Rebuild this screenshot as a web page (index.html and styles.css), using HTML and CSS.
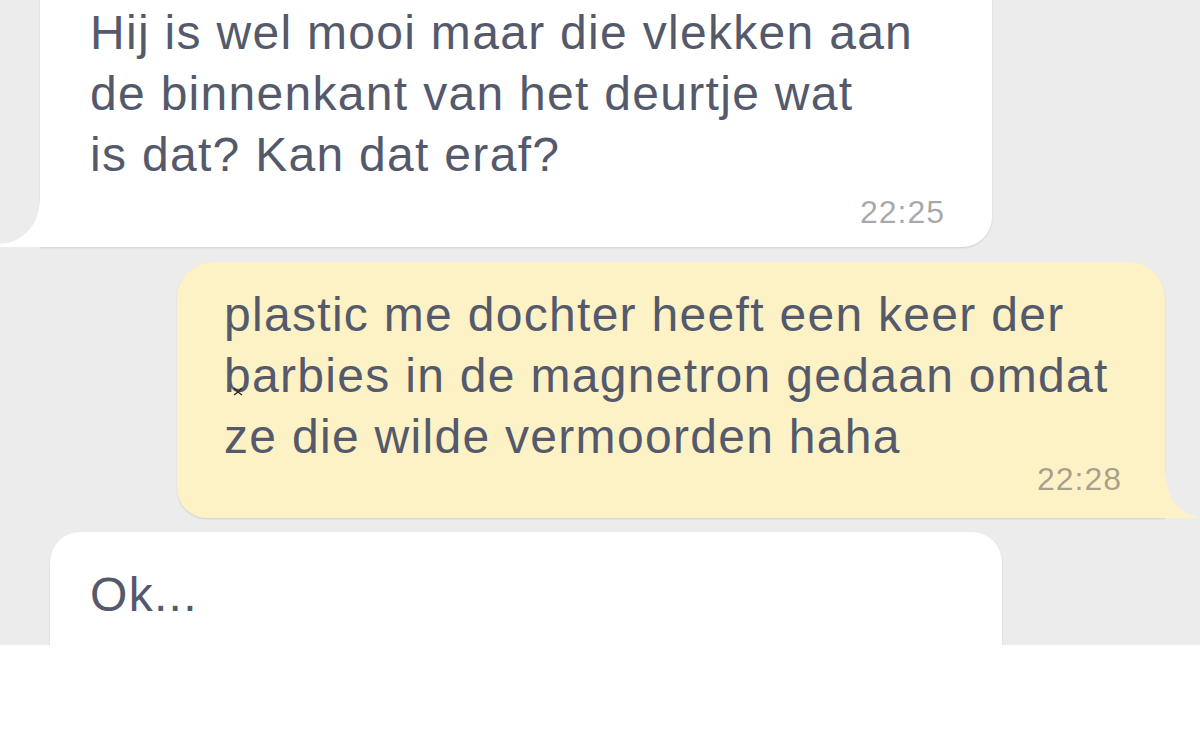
FILE: index.html
```html
<!DOCTYPE html>
<html lang="nl">
<head>
    <meta charset="UTF-8">
    <meta name="viewport" content="width=device-width, initial-scale=1.0">
    <title>Chat</title>
    <link rel="stylesheet" href="styles.css">
</head>
<body>
    <div class="chat">
        <div class="bubble in first">
            <div class="text">Hij is wel mooi maar die vlekken aan<br>de binnenkant van het deurtje wat<br>is dat? Kan dat eraf?</div>
            <div class="time">22:25</div>
        </div>
        <div class="bubble out">
            <div class="text">plastic me dochter heeft een keer der<br>barbies in de magnetron gedaan omdat<br>ze die wilde vermoorden haha</div>
            <div class="time">22:28</div>
            <svg class="cursor" width="12" height="10" viewBox="0 0 12 10">
                <path d="M2 2 L6 6 L10 2 M6 6 L2 9 M6 6 L10 9" stroke="#222" stroke-width="1.2" fill="none"/>
            </svg>
        </div>
        <div class="bubble in last">
            <div class="text">Ok...</div>
        </div>
    </div>
    <div class="footer"></div>
</body>
</html>
```

FILE: styles.css
```css
body {
    margin: 0;
    padding: 0;
    background-color: #fff;
    font-family: "Liberation Sans", Arial, sans-serif;
}

.chat {
    height: 645px;
    background-color: #ececec;
    overflow: hidden;
    display: flex;
    flex-direction: column;
    gap: 15px;
}

.bubble {
    position: relative;
    box-sizing: border-box;
    color: #545a6b;
    box-shadow: 0 1px 2px rgba(0,0,0,0.12);
}

.text {
    font-size: 48px;
    line-height: 61px;
    letter-spacing: 1.3px;
}

.time {
    font-size: 32px;
    line-height: 32px;
    letter-spacing: 1px;
    text-align: right;
    color: rgba(70,70,80,0.48);
}

.bubble.in {
    background-color: #fff;
}

.bubble.first {
    margin-top: -21px;
    margin-left: 40px;
    width: 952px;
    padding: 23px 47px 19px 50px;
    border-radius: 0 0 30px 0;
}

.bubble.first .time {
    margin-top: 11px;
}

.bubble.first::before {
    content: "";
    position: absolute;
    left: -40px;
    bottom: 0;
    width: 40px;
    height: 46px;
    background: radial-gradient(ellipse 40px 43px at 0 0, transparent 98%, #fff 100%);
}

.bubble.out {
    margin-left: 177px;
    width: 988px;
    padding: 22px 43px 23px 47px;
    background-color: #fdf1c6;
    border-radius: 36px 36px 0 30px;
}

.bubble.out .time {
    margin-top: -4px;
}

.bubble.out::after {
    content: "";
    position: absolute;
    right: -31px;
    bottom: 0;
    width: 31px;
    height: 48px;
    background: radial-gradient(ellipse 31px 46px at 100% 0, transparent 98%, #fdf1c6 100%);
}

.cursor {
    position: absolute;
    left: 55px;
    top: 124px;
}

.bubble.last {
    margin-top: -1px;
    margin-left: 50px;
    width: 952px;
    height: 200px;
    flex-shrink: 0;
    padding: 32px 40px 0 40px;
    border-radius: 30px 30px 0 0;
}

.footer {
    height: 99px;
}
```
